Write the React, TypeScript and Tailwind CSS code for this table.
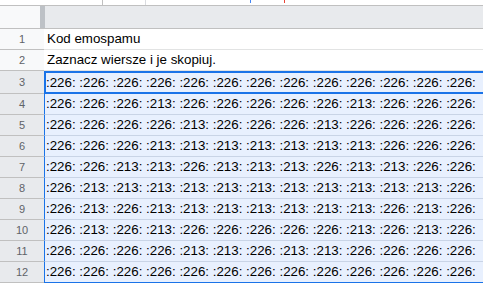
const rows: number[][] = [
  [226, 226, 226, 226, 226, 226, 226, 226, 226, 226, 226, 226, 226],
  [226, 226, 226, 213, 226, 226, 226, 226, 226, 213, 226, 226, 226],
  [226, 226, 226, 226, 213, 226, 226, 226, 213, 226, 226, 226, 226],
  [226, 226, 226, 213, 213, 213, 213, 213, 213, 213, 226, 226, 226],
  [226, 226, 213, 213, 226, 213, 213, 213, 226, 213, 213, 226, 226],
  [226, 213, 213, 213, 213, 213, 213, 213, 213, 213, 213, 213, 226],
  [226, 213, 226, 213, 213, 213, 213, 213, 213, 213, 226, 213, 226],
  [226, 213, 226, 213, 226, 226, 226, 226, 226, 213, 226, 213, 226],
  [226, 226, 226, 226, 213, 213, 226, 213, 213, 226, 226, 226, 226],
  [226, 226, 226, 226, 226, 226, 226, 226, 226, 226, 226, 226, 226],
]

function RowHeader({ n, selected, tall }: { n: number; selected?: boolean; tall?: boolean }) {
  return (
    <div
      className={`w-[44px] shrink-0 flex items-center justify-center border-b border-[#c0c0c0] text-[11px] text-[#5f6368] ${
        tall ? 'h-[23px]' : 'h-[21px]'
      } ${selected ? 'bg-[#e8eaed]' : 'bg-[#f8f9fa]'}`}
    >
      {n}
    </div>
  )
}

export default function App() {
  return (
    <div className="w-[483px] h-[288px] overflow-hidden bg-white font-['Liberation_Sans',Arial,sans-serif] text-black">
      {/* toolbar remnant */}
      <div className="h-[6px] border-b border-[#c0c0c0] flex">
        <div className="w-[102px]" />
        <div className="w-[43px] border-l border-[#c0c0c0]" />
        <div className="w-[105px] border-l border-[#dadce0]" />
        <div className="w-[1px] h-[3px] bg-[#4285f4]" />
        <div className="w-[33px]" />
        <div className="w-[1px] h-[3px] bg-[#ea4335]" />
      </div>

      {/* column header */}
      <div className="h-[23px] flex border-b border-[#c0c0c0]">
        <div className="w-[40px] bg-[#f8f9fa]" />
        <div className="w-[5px] bg-[#bdc1c6]" />
        <div className="flex-1 bg-[#e8eaed]" />
      </div>

      <div className="flex">
        <RowHeader n={1} />
        <div className="flex-1 h-[21px] flex items-center pl-[3px] border-b border-[#e2e3e3] text-[13.33px] whitespace-nowrap">
          Kod emospamu
        </div>
      </div>
      <div className="flex">
        <RowHeader n={2} />
        <div className="flex-1 h-[21px] flex items-center pl-[3px] border-b border-[#e2e3e3] text-[13.33px] whitespace-nowrap">
          Zaznacz wiersze i je skopiuj.
        </div>
      </div>

      {rows.map((r, i) => {
        const n = i + 3
        const first = i === 0
        const last = i === rows.length - 1
        const text = r.map((v) => `:${v}:`).join(' ')
        return (
          <div key={n} className="flex">
            <RowHeader n={n} selected tall={first} />
            {first ? (
              <div className="flex-1 min-w-0 h-[23px] flex items-center bg-[#e8f0fe] border-2 border-r-0 border-[#1a73e8] overflow-hidden whitespace-nowrap text-[13.33px]">
                {text}
              </div>
            ) : (
              <div
                className={`flex-1 min-w-0 h-[21px] flex items-center pl-[1px] bg-[#e8f0fe] border-l border-l-[#1a73e8] border-b overflow-hidden whitespace-nowrap text-[13.33px] ${
                  last ? 'border-b-[#1a73e8]' : 'border-b-[#c9d4e6]'
                }`}
              >
                {text}
              </div>
            )}
          </div>
        )
      })}
    </div>
  )
}
